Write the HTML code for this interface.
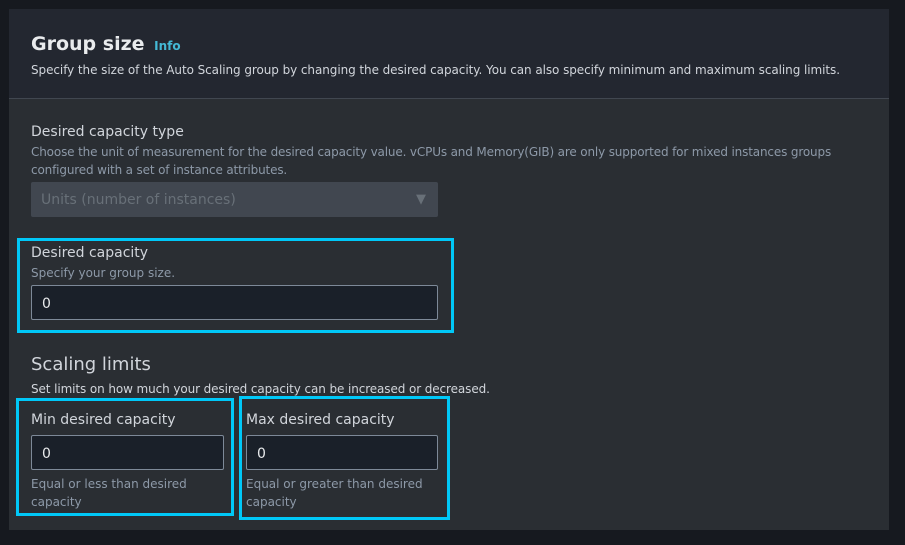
<!DOCTYPE html>
<html><head><style>
*{margin:0;padding:0;box-sizing:border-box}
body{width:905px;height:545px;background:#16191f;font-family:"DejaVu Sans","Liberation Sans",sans-serif;position:relative;overflow:hidden}
.a{position:absolute;white-space:nowrap}
.card{position:absolute;left:9px;top:9px;width:880px;height:521px;background:#2a2e33}
.head{position:absolute;left:9px;top:9px;width:880px;height:90px;background:#232730;border-bottom:1px solid #414750}
.t{color:#d1d5db}
.s{color:#8d99a8;font-size:12px}
.inp{position:absolute;background:#1a2029;border:1px solid #7d8998;border-radius:2px;color:#e9ebed;font-size:14px;padding:9px 0 0 10px}
.box{position:absolute;border:3px solid #00c8f8}
</style></head><body>
<div class="card"></div>
<div class="head"></div>
<div class="a" style="left:31px;top:33px;font-size:19px;font-weight:bold;color:#e9ebed">Group size <span style="font-size:12px;color:#44b9d6;margin-left:3px">Info</span></div>
<div class="a" style="left:31px;top:63px;font-size:12px;color:#d1d5db;letter-spacing:-0.07px">Specify the size of the Auto Scaling group by changing the desired capacity. You can also specify minimum and maximum scaling limits.</div>
<div class="a t" style="left:31px;top:124px;font-size:14px">Desired capacity type</div>
<div class="a s" style="left:31px;top:145px;letter-spacing:-0.15px">Choose the unit of measurement for the desired capacity value. vCPUs and Memory(GIB) are only supported for mixed instances groups</div>
<div class="a s" style="left:31px;top:163px;letter-spacing:-0.15px">configured with a set of instance attributes.</div>
<div class="a" style="left:31px;top:182px;width:407px;height:35px;background:#414750;border-radius:2px;color:#687078;font-size:14px;padding:10px 0 0 10px">Units (number of instances)<span style="position:absolute;right:12px;top:10px;font-size:13px;color:#687078">▼</span></div>
<div class="box" style="left:17px;top:238px;width:437px;height:95px"></div>
<div class="a t" style="left:31px;top:245px;font-size:14px">Desired capacity</div>
<div class="a s" style="left:31px;top:266px">Specify your group size.</div>
<div class="inp" style="left:31px;top:285px;width:407px;height:35px;padding-top:10px">0</div>
<div class="a" style="left:31px;top:354px;font-size:18px;color:#d1d5db">Scaling limits</div>
<div class="a t" style="left:31px;top:382px;font-size:12px;letter-spacing:-0.1px">Set limits on how much your desired capacity can be increased or decreased.</div>
<div class="box" style="left:16px;top:398px;width:218px;height:118px"></div>
<div class="box" style="left:239px;top:396px;width:211px;height:124px"></div>
<div class="a t" style="left:31px;top:412px;font-size:14px">Min desired capacity</div>
<div class="inp" style="left:31px;top:435px;width:193px;height:35px;padding-top:10px">0</div>
<div class="a s" style="left:31px;top:475px;line-height:18px">Equal or less than desired<br>capacity</div>
<div class="a t" style="left:246px;top:412px;font-size:14px">Max desired capacity</div>
<div class="inp" style="left:246px;top:435px;width:192px;height:35px;padding-top:10px">0</div>
<div class="a s" style="left:246px;top:475px;line-height:18px">Equal or greater than desired<br>capacity</div>
</body></html>
